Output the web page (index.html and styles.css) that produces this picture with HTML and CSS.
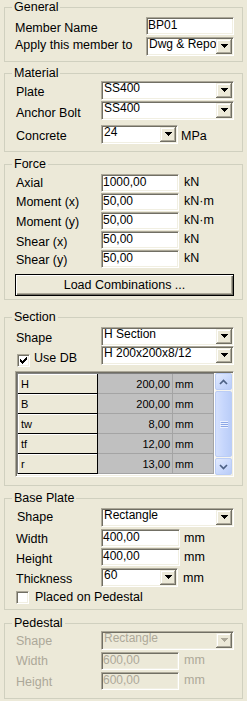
FILE: index.html
```html
<!DOCTYPE html>
<html>
<head>
<meta charset="utf-8">
<link rel="stylesheet" href="styles.css">
</head>
<body>
<div class="panel">

<fieldset class="grp g-general">
  <legend>General</legend>
  <div class="row h20">
    <span class="lbl wg pt4">Member Name</span>
    <span class="edit w88">BP01</span>
  </div>
  <div class="row h19">
    <span class="lbl wg pt1">Apply this member to</span>
    <span class="combo w88"><span class="val">Dwg &amp; Report</span><span class="dd"><svg width="7" height="4" viewBox="0 0 7 4"><path d="M0 0h7v1H0zM1 1h5v1H1zM2 2h3v1H2zM3 3h1v1H3z"/></svg></span></span>
  </div>
</fieldset>

<fieldset class="grp g-material">
  <legend>Material</legend>
  <div class="row h20">
    <span class="lbl pt4">Plate</span>
    <span class="combo w133"><span class="val">SS400</span><span class="dd"><svg width="7" height="4" viewBox="0 0 7 4"><path d="M0 0h7v1H0zM1 1h5v1H1zM2 2h3v1H2zM3 3h1v1H3z"/></svg></span></span>
  </div>
  <div class="row h24">
    <span class="lbl pt5">Anchor Bolt</span>
    <span class="combo w133"><span class="val">SS400</span><span class="dd"><svg width="7" height="4" viewBox="0 0 7 4"><path d="M0 0h7v1H0zM1 1h5v1H1zM2 2h3v1H2zM3 3h1v1H3z"/></svg></span></span>
  </div>
  <div class="row h19">
    <span class="lbl pt4">Concrete</span>
    <span class="combo w77"><span class="val">24</span><span class="dd"><svg width="7" height="4" viewBox="0 0 7 4"><path d="M0 0h7v1H0zM1 1h5v1H1zM2 2h3v1H2zM3 3h1v1H3z"/></svg></span></span>
    <span class="unit u3 pt4">MPa</span>
  </div>
</fieldset>

<fieldset class="grp g-force">
  <legend>Force</legend>
  <div class="row h19">
    <span class="lbl pt2">Axial</span>
    <span class="edit w78">1000,00</span>
    <span class="unit u5 pt1">kN</span>
  </div>
  <div class="row h19">
    <span class="lbl pt2">Moment (x)</span>
    <span class="edit w78">50,00</span>
    <span class="unit u5 pt1">kN·m</span>
  </div>
  <div class="row h19">
    <span class="lbl pt3">Moment (y)</span>
    <span class="edit w78">50,00</span>
    <span class="unit u5 pt1">kN·m</span>
  </div>
  <div class="row h19">
    <span class="lbl pt4">Shear (x)</span>
    <span class="edit w78">50,00</span>
    <span class="unit u5 pt1">kN</span>
  </div>
  <div class="row h19">
    <span class="lbl pt3">Shear (y)</span>
    <span class="edit w78">50,00</span>
    <span class="unit u5 pt1">kN</span>
  </div>
  <div class="btn">Load Combinations ...</div>
</fieldset>

<fieldset class="grp g-section">
  <legend>Section</legend>
  <div class="row h19">
    <span class="lbl pt4">Shape</span>
    <span class="combo w133"><span class="val">H Section</span><span class="dd"><svg width="7" height="4" viewBox="0 0 7 4"><path d="M0 0h7v1H0zM1 1h5v1H1zM2 2h3v1H2zM3 3h1v1H3z"/></svg></span></span>
  </div>
  <div class="row h19">
    <span class="lbl chk">
      <span class="cb cb-db"><svg width="7" height="7" viewBox="0 0 7 7"><path d="M6 0h1v3H6zM5 1h1v3H5zM4 2h1v3H4zM3 3h1v3H3zM2 4h1v3H2zM1 3h1v3H1zM0 2h1v3H0z"/></svg></span>
      <span class="cbt db pt5">Use DB</span>
    </span>
    <span class="combo w133"><span class="val">H 200x200x8/12</span><span class="dd"><svg width="7" height="4" viewBox="0 0 7 4"><path d="M0 0h7v1H0zM1 1h5v1H1zM2 2h3v1H2zM3 3h1v1H3z"/></svg></span></span>
  </div>
  <div class="grid">
    <div class="cells">
      <div class="hc">H</div><div class="vc">200,00</div><div class="uc">mm</div>
      <div class="hc">B</div><div class="vc">200,00</div><div class="uc">mm</div>
      <div class="hc">tw</div><div class="vc">8,00</div><div class="uc">mm</div>
      <div class="hc">tf</div><div class="vc">12,00</div><div class="uc">mm</div>
      <div class="hc">r</div><div class="vc">13,00</div><div class="uc">mm</div>
    </div>
    <div class="gsep"></div>
    <div class="sb">
      <div class="sbb"><svg width="9" height="6" viewBox="0 0 9 6"><polyline points="1,5 4.5,1.5 8,5" fill="none" stroke="#4D6185" stroke-width="1.7"/></svg></div>
      <div class="track"><div class="thumb"><svg width="8" height="7" viewBox="0 0 8 7"><path d="M0 0h8v1H0zM0 2h8v1H0zM0 4h8v1H0zM0 6h8v1H0z" fill="#EEF3FE"/><path d="M1 1h7v1H1zM1 3h7v1H1zM1 5h7v1H1z" fill="#8CA7E6"/></svg></div></div>
      <div class="sbb"><svg width="9" height="6" viewBox="0 0 9 6"><polyline points="1,1 4.5,4.5 8,1" fill="none" stroke="#4D6185" stroke-width="1.7"/></svg></div>
    </div>
  </div>
</fieldset>

<fieldset class="grp g-base">
  <legend>Base Plate</legend>
  <div class="row h21">
    <span class="lbl pt2 lx2">Shape</span>
    <span class="combo w133"><span class="val">Rectangle</span><span class="dd"><svg width="7" height="4" viewBox="0 0 7 4"><path d="M0 0h7v1H0zM1 1h5v1H1zM2 2h3v1H2zM3 3h1v1H3z"/></svg></span></span>
  </div>
  <div class="row h19">
    <span class="lbl pt3">Width</span>
    <span class="edit w79">400,00</span>
    <span class="unit u4 pt2">mm</span>
  </div>
  <div class="row h20">
    <span class="lbl pt4">Height</span>
    <span class="edit w79">400,00</span>
    <span class="unit u4 pt2">mm</span>
  </div>
  <div class="row h21">
    <span class="lbl pt4">Thickness</span>
    <span class="combo w77"><span class="val">60</span><span class="dd"><svg width="7" height="4" viewBox="0 0 7 4"><path d="M0 0h7v1H0zM1 1h5v1H1zM2 2h3v1H2zM3 3h1v1H3z"/></svg></span></span>
    <span class="unit u5 pt3">mm</span>
  </div>
  <div class="row h17">
    <span class="cb cb-ped"></span>
    <span class="cbt ped">Placed on Pedestal</span>
  </div>
</fieldset>

<fieldset class="grp g-ped">
  <legend>Pedestal</legend>
  <div class="row h21">
    <span class="lbl dis pt3">Shape</span>
    <span class="combo w133 dis"><span class="val">Rectangle</span><span class="dd"><svg width="7" height="4" viewBox="0 0 7 4"><path d="M0 0h7v1H0zM1 1h5v1H1zM2 2h3v1H2zM3 3h1v1H3z"/></svg></span></span>
  </div>
  <div class="row h20">
    <span class="lbl dis pt2">Width</span>
    <span class="edit w78 dis">600,00</span>
    <span class="unit u5 dis pt1">mm</span>
  </div>
  <div class="row h18">
    <span class="lbl dis pt3">Height</span>
    <span class="edit w78 dis">600,00</span>
    <span class="unit u5 dis pt1">mm</span>
  </div>
</fieldset>

</div>
</body>
</html>
```

FILE: styles.css
```css
* { box-sizing: border-box; }
html, body { margin: 0; padding: 0; }
body {
  background: #ECE9D8;
  width: 247px;
  height: 701px;
  overflow: hidden;
  font-family: "Liberation Sans", Arial, sans-serif;
  font-size: 12.5px;
  color: #000;
}
.panel { padding: 0 4px; }

/* group boxes */
.grp {
  margin: 0;
  width: 239px;
  min-width: 0;
  border: 1px solid #D0D0BF;
  padding: 0 8px 0 10px;
}
.grp legend {
  padding: 0 2px;
  margin-left: -3px;
  line-height: 15px;
  font-size: 12.5px;
}
.g-general { padding-top: 2px; padding-bottom: 5px; }
.g-material { margin-top: 4px; padding-top: 0; padding-bottom: 7px; }
.g-force { margin-top: 5px; padding-top: 2px; padding-bottom: 3px; }
.g-section { margin-top: 10px; padding-top: 2px; padding-bottom: 8px; }
.g-base { margin-top: 5px; padding-top: 2px; padding-bottom: 3px; }
.g-ped { margin-top: 6px; padding-top: 0; padding-bottom: 8px; }

/* rows */
.row { display: flex; align-items: flex-start; white-space: nowrap; }
.h17 { height: 17px; }
.h18 { height: 18px; }
.h19 { height: 19px; }
.h20 { height: 20px; }
.h21 { height: 21px; }
.h24 { height: 24px; }

.lbl {
  flex: none;
  width: 86px;
  padding-left: 1px;
  line-height: 15px;
}
.lbl.wg { width: 131px; padding-left: 0; }
.lx2 { padding-left: 2px; }
.pt1 { padding-top: 1px; }
.pt2 { padding-top: 2px; }
.pt3 { padding-top: 3px; }
.pt4 { padding-top: 4px; }
.pt5 { padding-top: 5px; }

.unit { line-height: 15px; }
.u3 { margin-left: 3px; }
.u4 { margin-left: 4px; }
.u5 { margin-left: 5px; }

.dis { color: #ACA899; }

/* sunken edit box */
.edit {
  flex: none;
  height: 18px;
  border: 1px solid;
  border-color: #ACA899 #FFFFFF #FFFFFF #ACA899;
  box-shadow: inset 1px 1px 0 #716F64, inset -1px -1px 0 #F1EFE2;
  background: #FFFFFF;
  font-size: 12px;
  line-height: 14px;
  padding: 0 0 0 1px;
  overflow: hidden;
}
.edit.dis { background: #ECE9D8; }
.w78 { width: 78px; }
.w79 { width: 79px; }
.w77 { width: 77px; }
.w88 { width: 88px; }
.w133 { width: 133px; }

/* combo box */
.combo {
  flex: none;
  display: flex;
  height: 19px;
  border: 1px solid;
  border-color: #ACA899 #FFFFFF #FFFFFF #ACA899;
  box-shadow: inset 1px 1px 0 #716F64, inset -1px -1px 0 #F1EFE2;
  background: #FFFFFF;
  padding: 1px;
}
.combo.dis { background: #ECE9D8; }
.combo .val {
  flex: 1;
  min-width: 0;
  overflow: hidden;
  font-size: 12px;
  line-height: 13px;
  padding-left: 1px;
  margin-top: -1px;
}
.dd {
  flex: none;
  width: 16px;
  height: 15px;
  background: #ECE9D8;
  box-shadow: inset -1px -1px 0 #716F64, inset 1px 1px 0 #F1EFE2, inset -2px -2px 0 #ACA899, inset 2px 2px 0 #FFFFFF;
  display: flex;
  align-items: center;
  justify-content: center;
  padding-bottom: 1px;
}
.dd svg { display: block; fill: #000; }
.combo.dis .dd svg { fill: #ACA899; }

/* push button */
.btn {
  margin-top: 5px;
  width: 219px;
  height: 22px;
  border: 1px solid #000;
  box-shadow: inset 1px 1px 0 #FFFFFF, inset -1px -1px 0 #716F64, inset -2px -2px 0 #ACA899;
  background: #ECE9D8;
  text-align: center;
  line-height: 20px;
}

/* check boxes */
.chk { display: flex; align-items: flex-start; }
.cb {
  flex: none;
  width: 13px;
  height: 13px;
  border: 1px solid;
  border-color: #ACA899 #FFFFFF #FFFFFF #ACA899;
  box-shadow: inset 1px 1px 0 #716F64, inset -1px -1px 0 #F1EFE2;
  background: #FFFFFF;
  padding: 2px;
  margin-left: 1px;
}
.cb svg { display: block; fill: #000; }
.cb-db { margin-top: 8px; }
.cb-ped { margin-top: 2px; }
.cbt { line-height: 15px; }
.cbt.db { margin-left: 4px; }
.cbt.ped { margin-left: 6px; padding-top: 1px; }

/* property grid */
.grid {
  margin-top: 6px;
  display: flex;
  width: 219px;
  height: 106px;
  border: 1px solid;
  border-color: #ACA899 #FFFFFF #FFFFFF #ACA899;
  box-shadow: inset 1px 1px 0 #716F64, inset -1px -1px 0 #F1EFE2;
  background: #FFFFFF;
  padding: 1px;
}
.cells {
  flex: none;
  display: grid;
  grid-template-columns: 80px 75px 41px;
  grid-template-rows: repeat(5, 20px);
  border-left: 1px solid #808080;
  border-top: 1px solid #808080;
  align-self: flex-start;
  font-size: 11px;
}
.hc, .vc, .uc {
  line-height: 17px;
  padding-top: 2px;
  white-space: nowrap;
}
.hc {
  background: #ECE9D8;
  border-right: 1px solid #000;
  border-bottom: 1px solid #000;
  box-shadow: inset 1px 1px 0 #FFFFFF;
  padding-left: 3px;
}
.vc {
  background: #C0C0C0;
  border-right: 1px solid #A4A4A4;
  border-bottom: 1px solid #A4A4A4;
  text-align: right;
  padding-right: 2px;
}
.uc {
  background: #C0C0C0;
  border-right: 1px solid #A4A4A4;
  border-bottom: 1px solid #A4A4A4;
  padding-left: 2px;
}
.gsep { flex: none; width: 1px; }

/* XP scrollbar */
.sb {
  flex: none;
  width: 17px;
  display: flex;
  flex-direction: column;
  background: #F5F4EE;
}
.sbb {
  flex: none;
  height: 17px;
  border: 1px solid #BBCDF6;
  border-radius: 2px;
  background: linear-gradient(135deg, #E3EBFE 0%, #CAD9FC 55%, #B9CCF7 100%);
  display: flex;
  align-items: center;
  justify-content: center;
}
.sbb svg { display: block; }
.track {
  flex: 1;
  padding: 1px 0;
  display: flex;
}
.thumb {
  flex: 1;
  border: 1px solid #BBCDF6;
  border-radius: 2px;
  background: linear-gradient(to right, #D5E1FD 0%, #C6D6FC 50%, #BACDF8 100%);
  display: flex;
  align-items: center;
  justify-content: center;
}
.thumb svg { display: block; }
```
